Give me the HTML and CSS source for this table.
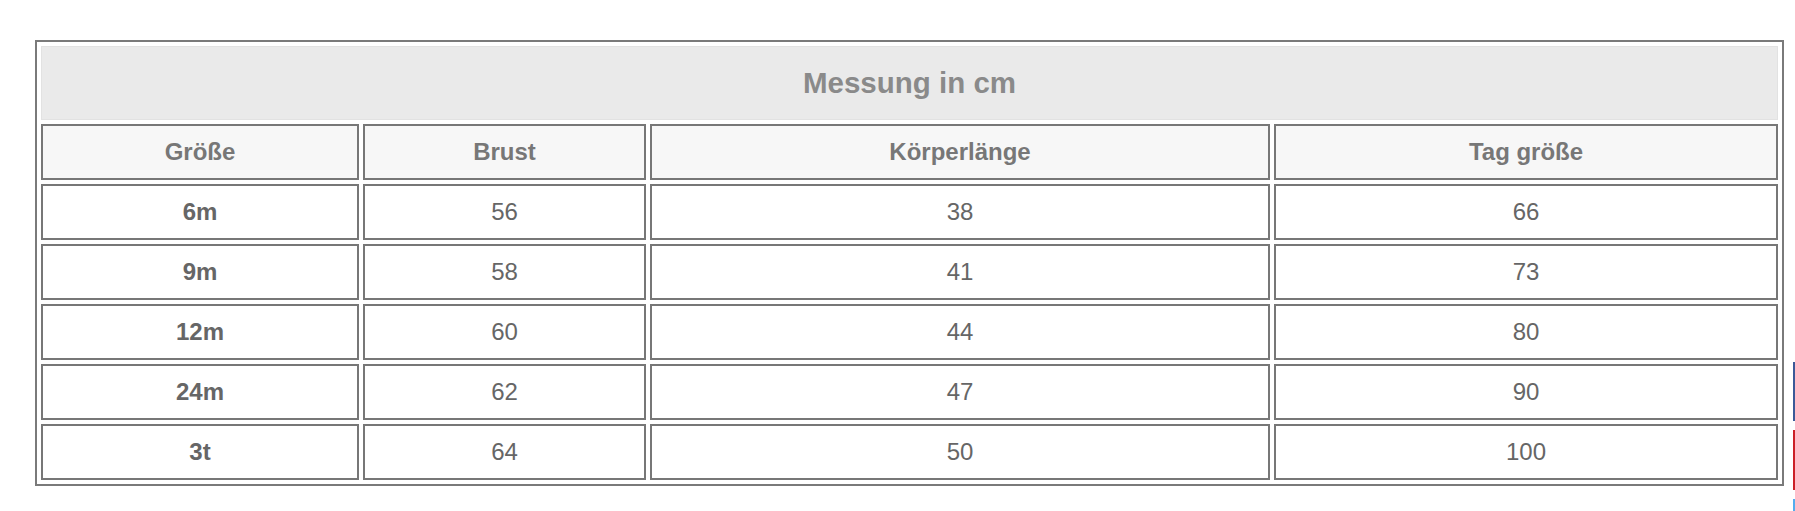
FILE: index.html
```html
<!DOCTYPE html>
<html lang="de">
<head>
<meta charset="utf-8">
<title>Messung in cm</title>
<link rel="stylesheet" href="styles.css">
</head>
<body>
<div class="page">
  <table class="size-table">
    <colgroup>
      <col class="c1"><col class="c2"><col class="c3"><col class="c4">
    </colgroup>
    <thead>
      <tr><th class="caption-cell" colspan="4">Messung in cm</th></tr>
      <tr class="head-row">
        <th>Größe</th><th>Brust</th><th>Körperlänge</th><th>Tag größe</th>
      </tr>
    </thead>
    <tbody>
      <tr><th>6m</th><td>56</td><td>38</td><td>66</td></tr>
      <tr><th>9m</th><td>58</td><td>41</td><td>73</td></tr>
      <tr><th>12m</th><td>60</td><td>44</td><td>80</td></tr>
      <tr><th>24m</th><td>62</td><td>47</td><td>90</td></tr>
      <tr><th>3t</th><td>64</td><td>50</td><td>100</td></tr>
    </tbody>
  </table>
</div>
<div class="share">
  <span class="share-btn fb"></span>
  <span class="share-btn pin"></span>
  <span class="share-btn tw"></span>
</div>
</body>
</html>
```

FILE: styles.css
```css
html, body {
  margin: 0;
  padding: 0;
  background: #ffffff;
}
body {
  font-family: "Liberation Sans", Arial, sans-serif;
  overflow: hidden;
}
.page {
  padding: 40px 0 0 35px;
}
.size-table {
  width: 1749px;
  table-layout: fixed;
  border-collapse: separate;
  border-spacing: 4px;
  border: 2px solid #7a7a7a;
}
.c1 { width: 318px; }
.c2 { width: 283px; }
.c3 { width: 620px; }
.c4 { width: 504px; }

.size-table th,
.size-table td {
  box-sizing: border-box;
  height: 56px;
  padding: 0;
  border: 2px solid #777777;
  text-align: center;
  vertical-align: middle;
  font-size: 24px;
  line-height: 28px;
  color: #666666;
  background: #ffffff;
}
.size-table td {
  font-weight: normal;
}
.size-table tbody th {
  font-weight: bold;
}
.size-table .caption-cell {
  height: 74px;
  border: 1px solid #e2e2e2;
  background: #eaeaea;
  color: #8a8a8a;
  font-size: 29.5px;
  font-weight: bold;
}
.head-row th {
  background: #f7f7f7;
  color: #777777;
  font-weight: bold;
}

.share {
  position: fixed;
  right: 0;
  top: 362px;
  width: 2px;
  display: flex;
  flex-direction: column;
  gap: 9px;
}
.share-btn {
  display: block;
  width: 2px;
  height: 59px;
}
.share-btn.fb { background: #3b5998; }
.share-btn.pin { background: #cb2027; height: 60px; }
.share-btn.tw { background: #55acee; height: 20px; }
```
